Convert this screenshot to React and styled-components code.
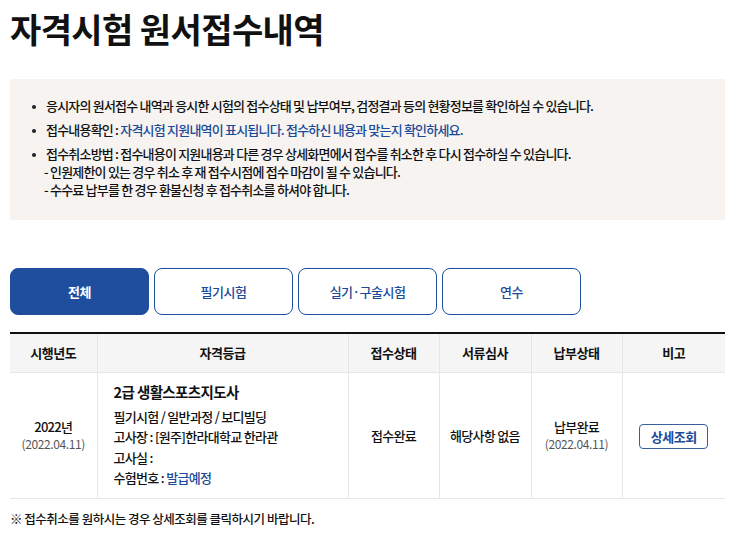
import React from "react";
import styled, { createGlobalStyle } from "styled-components";

const Global = createGlobalStyle`
  html, body { margin: 0; padding: 0; background: #fff; }
  body { font-family: "Noto Sans CJK KR", "Noto Sans", sans-serif; color: #111; }
  * { box-sizing: border-box; }
`;

const Page = styled.div`
  width: 750px;
  padding: 0 25px 0 10px;
`;

const Title = styled.h1`
  margin: 0;
  padding-top: 6px;
  height: 79px;
  font-size: 34px;
  font-weight: 700;
  letter-spacing: -0.6px;
  line-height: 46px;
  color: #111;
`;

const InfoBox = styled.div`
  background: #f6f3f1;
  height: 141px;
  padding: 18px 20px 0 20px;
`;

const List = styled.ul`
  margin: 0;
  padding: 0;
  list-style: none;
`;

const Item = styled.li`
  position: relative;
  padding-left: 16px;
  font-size: 13px;
  font-weight: 500;
  letter-spacing: -0.8px;
  line-height: 18px;
  margin-bottom: 6px;
  &::before {
    content: "";
    position: absolute;
    left: 2px;
    top: 8px;
    width: 4px;
    height: 4px;
    border-radius: 50%;
    background: #222;
  }
`;

const Sub = styled.div`
  margin-left: -2px;
`;

const Blue = styled.span`
  color: #1a4a98;
`;

const Tabs = styled.div`
  display: flex;
  gap: 5px;
  margin-top: 48px;
`;

const Tab = styled.button`
  width: 139px;
  height: 47px;
  border-radius: 8px;
  border: 1.5px solid #1f4e9f;
  background: ${(p) => (p.$active ? "#1f4e9f" : "#fff")};
  color: ${(p) => (p.$active ? "#fff" : "#1a4a98")};
  font-family: inherit;
  font-size: 13px;
  font-weight: ${(p) => (p.$active ? 700 : 500)};
  letter-spacing: -0.5px;
  padding: 0;
  cursor: pointer;
`;

const Table = styled.table`
  width: 715px;
  margin-top: 17px;
  border-collapse: collapse;
  border-top: 2px solid #111;
  table-layout: fixed;
`;

const Th = styled.th`
  height: 39px;
  background: #f5f5f5;
  font-size: 13px;
  font-weight: 700;
  letter-spacing: -0.5px;
  border-bottom: 1px solid #e6e6e6;
  border-left: 1px solid #e6e6e6;
  &:first-child { border-left: none; }
`;

const Td = styled.td`
  height: 126px;
  text-align: ${(p) => (p.$left ? "left" : "center")};
  padding: ${(p) => (p.$left ? "0 0 0 16px" : "0")};
  font-size: 13px;
  font-weight: 500;
  letter-spacing: -0.7px;
  line-height: 17px;
  border-bottom: 1px solid #e6e6e6;
  border-left: 1px solid #e6e6e6;
  &:first-child { border-left: none; }
`;

const Date = styled.div`
  color: #555;
  font-size: 12px;
  font-weight: 400;
  letter-spacing: -0.4px;
`;

const CertName = styled.div`
  font-size: 14.5px;
  font-weight: 700;
  letter-spacing: -0.6px;
  line-height: 20px;
  margin-bottom: 5px;
`;

const CertLine = styled.div`
  line-height: 20.5px;
`;

const DetailButton = styled.button`
  width: 69px;
  height: 25px;
  border: 1.5px solid #3a5e9e;
  border-radius: 4px;
  background: #fff;
  color: #1a4a98;
  font-family: inherit;
  font-size: 13px;
  font-weight: 700;
  letter-spacing: -0.5px;
  padding: 0;
  margin-top: 2px;
`;

const Note = styled.p`
  margin: 11px 0 0;
  font-size: 12.5px;
  font-weight: 500;
  letter-spacing: -0.5px;
  line-height: 18px;
`;

export default function App() {
  return (
    <Page>
      <Global />
      <Title>자격시험 원서접수내역</Title>
      <InfoBox>
        <List>
          <Item>응시자의 원서접수 내역과 응시한 시험의 접수상태 및 납부여부, 검정결과 등의 현황정보를 확인하실 수 있습니다.</Item>
          <Item>
            접수내용확인 : <Blue>자격시험 지원내역이 표시됩니다. 접수하신 내용과 맞는지 확인하세요.</Blue>
          </Item>
          <Item>
            접수취소방법 : 접수내용이 지원내용과 다른 경우 상세화면에서 접수를 취소한 후 다시 접수하실 수 있습니다.
            <Sub>- 인원제한이 있는 경우 취소 후 재 접수시점에 접수 마감이 될 수 있습니다.</Sub>
            <Sub>- 수수료 납부를 한 경우 환불신청 후 접수취소를 하셔야 합니다.</Sub>
          </Item>
        </List>
      </InfoBox>
      <Tabs>
        <Tab $active>전체</Tab>
        <Tab>필기시험</Tab>
        <Tab>실기·구술시험</Tab>
        <Tab>연수</Tab>
      </Tabs>
      <Table>
        <colgroup>
          <col style={{ width: 87 }} />
          <col style={{ width: 251 }} />
          <col style={{ width: 91 }} />
          <col style={{ width: 92 }} />
          <col style={{ width: 91 }} />
          <col style={{ width: 103 }} />
        </colgroup>
        <thead>
          <tr>
            <Th>시행년도</Th>
            <Th>자격등급</Th>
            <Th>접수상태</Th>
            <Th>서류심사</Th>
            <Th>납부상태</Th>
            <Th>비고</Th>
          </tr>
        </thead>
        <tbody>
          <tr>
            <Td>
              <div>2022년</div>
              <Date>(2022.04.11)</Date>
            </Td>
            <Td $left>
              <CertName>2급 생활스포츠지도사</CertName>
              <CertLine>필기시험 / 일반과정 / 보디빌딩</CertLine>
              <CertLine>고사장 : [원주]한라대학교 한라관</CertLine>
              <CertLine>고사실 :</CertLine>
              <CertLine>
                수험번호 : <Blue>발급예정</Blue>
              </CertLine>
            </Td>
            <Td>접수완료</Td>
            <Td>해당사항 없음</Td>
            <Td>
              <div>납부완료</div>
              <Date>(2022.04.11)</Date>
            </Td>
            <Td>
              <DetailButton>상세조회</DetailButton>
            </Td>
          </tr>
        </tbody>
      </Table>
      <Note>※ 접수취소를 원하시는 경우 상세조회를 클릭하시기 바랍니다.</Note>
    </Page>
  );
}
